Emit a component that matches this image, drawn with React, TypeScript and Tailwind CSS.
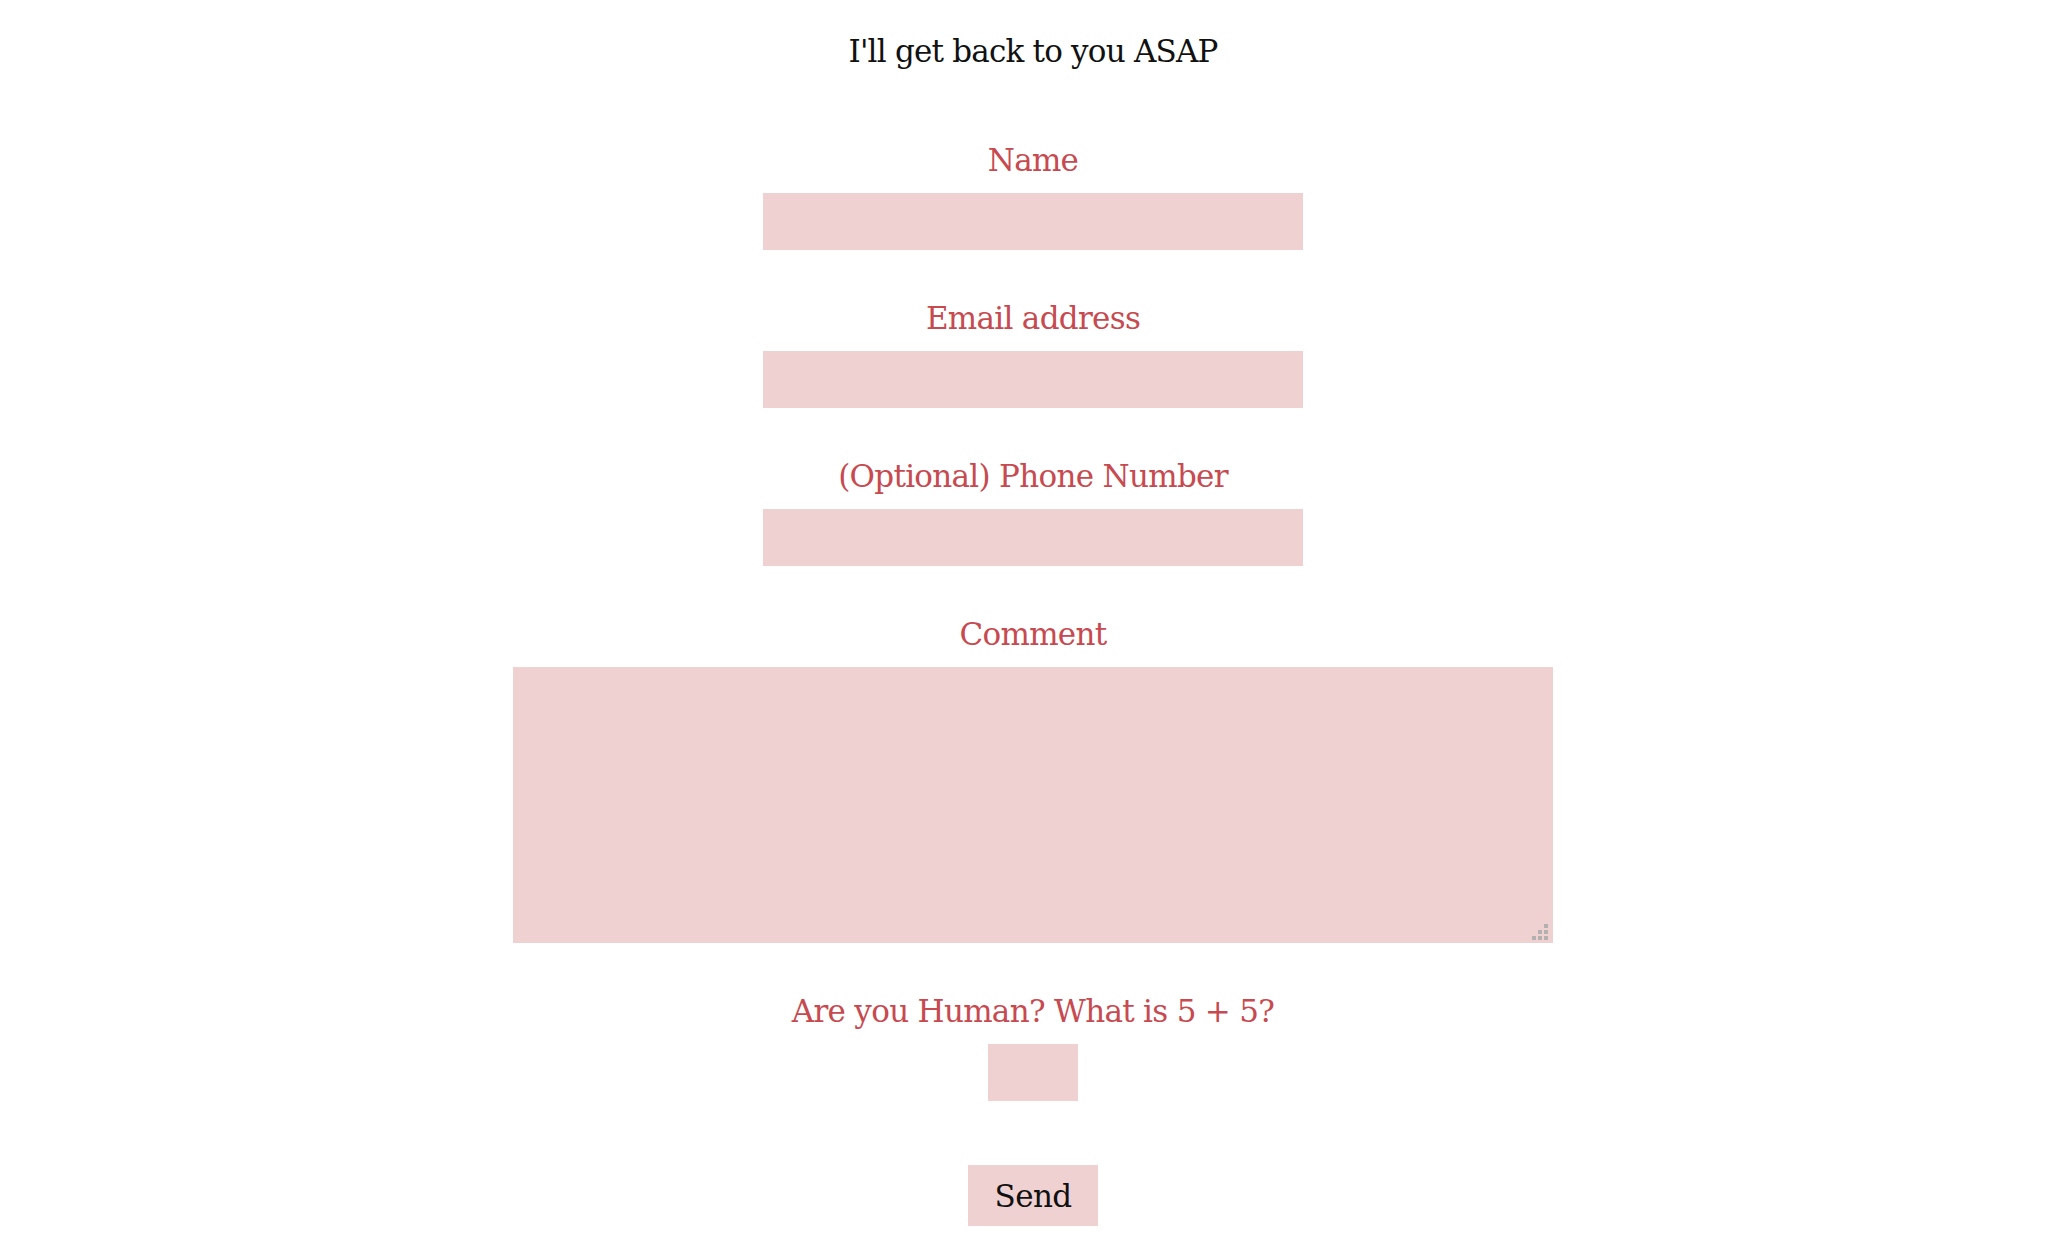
import React from "react";

const Field = ({ label, className }: { label: string; className: string }) => (
  <div className="flex flex-col items-center">
    <label className="text-[31px] leading-[38px] tracking-[-0.7px] text-[#c74a50]">{label}</label>
    <input type="text" className={"mt-[14px] h-[57px] bg-[#f0d1d1] outline-none " + className} />
  </div>
);

const Grip = () => (
  <div className="pointer-events-none absolute right-[5px] bottom-[3px] grid grid-cols-3 gap-[2px]">
    <span className="w-[4px] h-[4px]" />
    <span className="w-[4px] h-[4px]" />
    <span className="w-[4px] h-[4px] bg-[#b4b0b0]" />
    <span className="w-[4px] h-[4px]" />
    <span className="w-[4px] h-[4px] bg-[#b4b0b0]" />
    <span className="w-[4px] h-[4px] bg-[#b4b0b0]" />
    <span className="w-[4px] h-[4px] bg-[#b4b0b0]" />
    <span className="w-[4px] h-[4px] bg-[#b4b0b0]" />
    <span className="w-[4px] h-[4px] bg-[#b4b0b0]" />
  </div>
);

export default function App() {
  return (
    <div className="min-h-screen bg-white flex flex-col items-center pr-[3px] font-['DejaVu_Serif',serif]">
      <h1 className="mt-[33px] text-[31px] leading-[36px] tracking-[-0.8px] text-[#111111] font-normal">I'll get back to you ASAP</h1>
      <form className="mt-[72px] flex flex-col items-center" onSubmit={(e) => e.preventDefault()}>
        <Field label="Name" className="w-[540px]" />
        <div className="mt-[49px]">
          <Field label="Email address" className="w-[540px]" />
        </div>
        <div className="mt-[49px]">
          <Field label="(Optional) Phone Number" className="w-[540px]" />
        </div>
        <div className="mt-[49px] flex flex-col items-center">
          <label className="text-[31px] leading-[38px] tracking-[-0.7px] text-[#c74a50]">Comment</label>
          <div className="relative mt-[14px]">
            <textarea className="block w-[1040px] h-[276px] bg-[#f0d1d1] outline-none resize-none" />
            <Grip />
          </div>
        </div>
        <div className="mt-[49px]">
          <Field label="Are you Human? What is 5 + 5?" className="w-[90px]" />
        </div>
        <button type="submit" className="mt-[64px] w-[130px] h-[61px] bg-[#f0d1d1] text-[31px] leading-[36px] tracking-[-0.6px] text-[#111111]">
          Send
        </button>
      </form>
    </div>
  );
}
